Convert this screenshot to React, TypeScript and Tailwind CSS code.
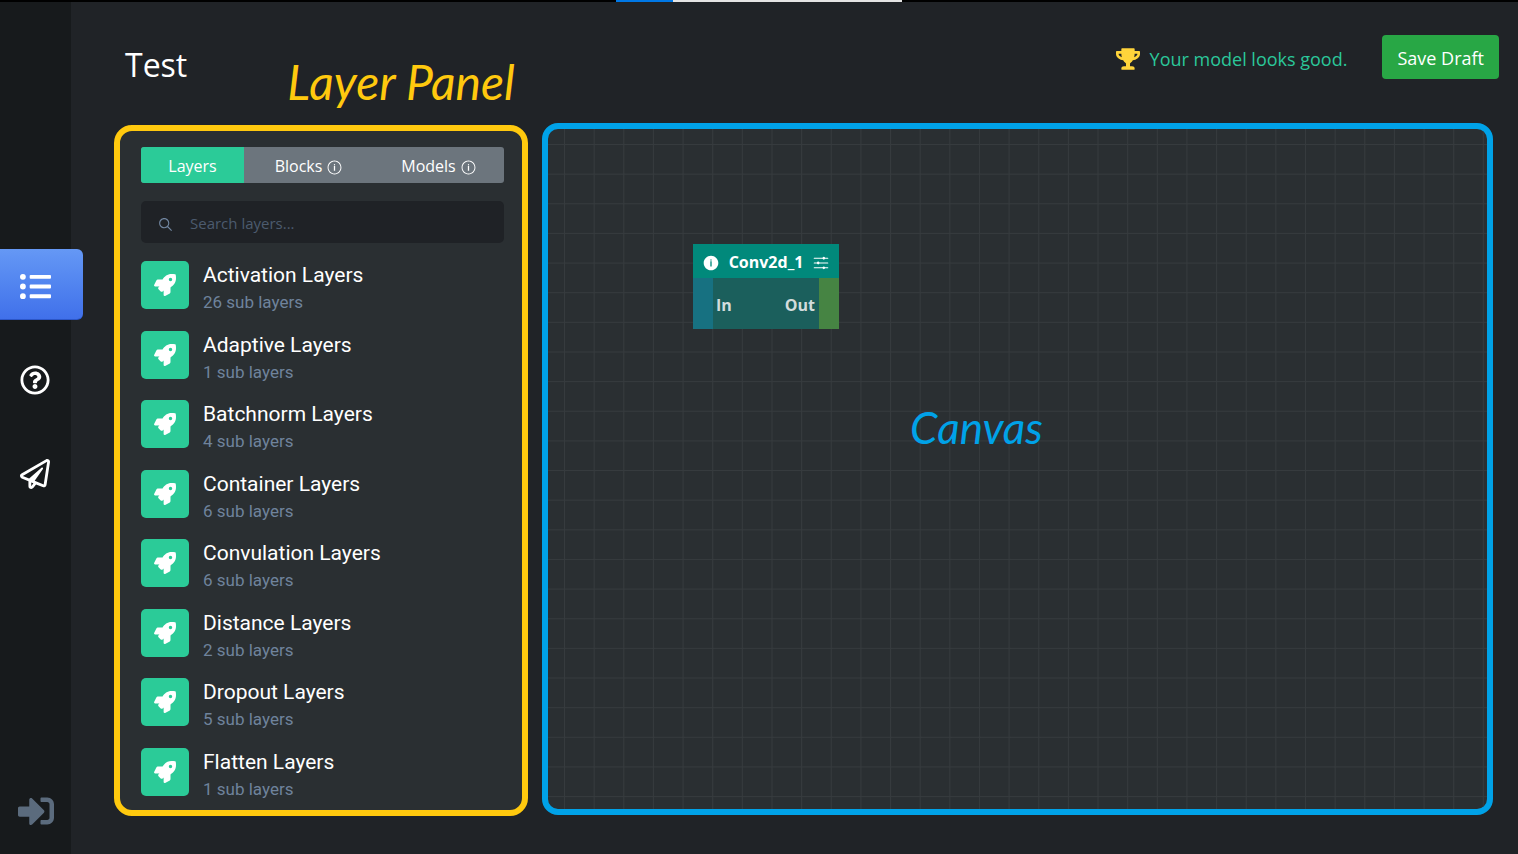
import React from "react";
import { FaListUl, FaRegQuestionCircle, FaRegPaperPlane, FaSignInAlt, FaTrophy, FaRocket } from "react-icons/fa";
import { IoIosInformationCircle, IoIosInformationCircleOutline, IoIosOptions, IoIosSearch } from "react-icons/io";

const layers = [
  { name: "Activation Layers", count: 26 },
  { name: "Adaptive Layers", count: 1 },
  { name: "Batchnorm Layers", count: 4 },
  { name: "Container Layers", count: 6 },
  { name: "Convulation Layers", count: 6 },
  { name: "Distance Layers", count: 2 },
  { name: "Dropout Layers", count: 5 },
  { name: "Flatten Layers", count: 1 },
];

function Sidebar() {
  return (
    <nav aria-label="Main" className="flex w-[71px] shrink-0 flex-col bg-[#171a1c] text-white">
      <div className="mt-[247px] flex flex-col items-start">
        <a href="#layers" aria-label="Layers" className="z-10 flex h-[71px] w-[83px] items-center rounded-r-md border-b border-[#2c56c8] bg-linear-to-b from-[#6598f5] to-[#4070ea] pt-1 pl-5">
          <FaListUl size={31} />
        </a>
        <a href="#help" aria-label="Help" className="mt-[45px] pl-5">
          <FaRegQuestionCircle size={30} />
        </a>
        <a href="#send" aria-label="Send" className="mt-16 pl-5">
          <FaRegPaperPlane size={30} />
        </a>
      </div>
      <a href="#exit" aria-label="Sign out" className="mt-auto mb-[25px] pl-[18px] text-[#5b6b7d]">
        <FaSignInAlt size={36} />
      </a>
    </nav>
  );
}

function LayerPanel() {
  return (
    <section aria-label="Layer panel" className="mt-0.5 flex w-[414px] shrink-0 flex-col overflow-hidden rounded-[18px] border-6 border-[#ffc90e] bg-[#2a2f32] pt-4 pr-[18px] pb-[14px] pl-[21px]">
      <div className="flex h-9 shrink-0 overflow-hidden rounded-[3px] bg-[#6c757d] text-base text-white">
        <button type="button" className="w-[103px] bg-[#2bcb98] pt-0.5">Layers</button>
        <button type="button" className="flex flex-1 items-center justify-center gap-1 pt-0.5">
          Blocks <IoIosInformationCircleOutline size={17} className="mt-0.5" />
        </button>
        <button type="button" className="flex flex-1 items-center justify-center gap-1 pt-0.5">
          Models <IoIosInformationCircleOutline size={17} className="mt-0.5" />
        </button>
      </div>
      <label className="mt-[18px] flex h-[42px] shrink-0 items-center gap-4 rounded-[5px] bg-[#1f2226] pt-0.5 pl-4 text-[#7186a0]">
        <IoIosSearch size={17} className="mt-0.5" />
        <input type="text" aria-label="Search layers" placeholder="Search layers..." className="min-w-0 flex-1 bg-transparent text-[15px] outline-none placeholder:text-[#4c5b6e]" />
      </label>
      <ul className="mt-[18px] flex flex-1 flex-col justify-between font-[Roboto,sans-serif]">
        {layers.map(({ name, count }) => (
          <li key={name} className="flex h-12 gap-[14px]">
            <span className="flex size-12 items-center justify-center rounded-[5px] bg-[#2bcb98] text-white">
              <FaRocket size={22} />
            </span>
            <div>
              <h2 className="text-[21px] leading-7 text-white">{name}</h2>
              <p className="text-[17px] leading-[26px] text-[#6f839c]">{count} sub layers</p>
            </div>
          </li>
        ))}
      </ul>
    </section>
  );
}

function Grid() {
  return (
    <svg className="absolute inset-0 size-full" aria-hidden="true">
      <defs>
        <pattern id="grid" width="29.64" height="29.64" patternUnits="userSpaceOnUse" x="16" y="15">
          <path d="M0.5 0V29.64M0 0.5H29.64" stroke="#363b3e" strokeWidth="1" fill="none" />
        </pattern>
      </defs>
      <rect width="100%" height="100%" fill="url(#grid)" />
    </svg>
  );
}

function Canvas() {
  return (
    <section aria-label="Canvas" className="relative mb-px min-w-0 flex-1 overflow-hidden rounded-[16px] border-6 border-[#00a2e8] bg-[#2a2f32]">
      <Grid />
      <article className="absolute top-[115px] left-[145px] w-[146px] text-base font-bold">
        <header className="flex h-[34px] items-center justify-between bg-[#01897b] px-[9px] pt-0.5 text-white">
          <IoIosInformationCircle size={18} className="mt-0.5" />
          <h2>Conv2d_1</h2>
          <IoIosOptions size={18} className="mt-0.5" />
        </header>
        <div className="flex h-[51px] bg-[#1b5f5c] text-[#d3dcdc]">
          <span className="w-5 bg-[#177181]" />
          <span className="flex flex-1 items-center justify-between pt-0.5 pr-1 pl-[3px]">
            <span>In</span>
            <span>Out</span>
          </span>
          <span className="w-5 bg-[#468443]" />
        </div>
      </article>
      <p className="absolute top-[268px] left-[362px] font-[Lato,sans-serif] text-[44px] leading-[60px] text-[#00a2e8] italic">Canvas</p>
    </section>
  );
}

export default function App() {
  return (
    <div className="flex min-h-screen flex-col bg-[#202327] font-['Open_Sans',sans-serif]">
      <div className="flex h-0.5 justify-center bg-black">
        <div className="w-[57px] bg-[#0078e6]" />
        <div className="w-[229px] bg-[#e4e4e4]" />
      </div>
      <div className="flex flex-1">
        <Sidebar />
        <div className="flex min-w-0 flex-1 flex-col pl-[43px]">
          <header className="flex h-[121px] items-start pr-[19px]">
            <h1 className="mt-[38px] ml-[11px] text-[32px] leading-[50px] text-white">Test</h1>
            <p className="mt-[50px] ml-[100px] font-[Lato,sans-serif] text-[48px] leading-[60px] text-[#ffc90e] italic">Layer Panel</p>
            <p className="mt-[43px] ml-auto flex items-center gap-[10px] text-lg leading-7 text-[#2bc79a]">
              <FaTrophy size={24} className="text-[#ffd43b]" />
              Your model looks good.
            </p>
            <button type="button" className="mt-[33px] ml-[35px] h-11 rounded-[4px] bg-[#28a745] px-[15px] pt-0.5 text-lg text-white">Save Draft</button>
          </header>
          <main className="mr-[25px] mb-[38px] flex flex-1 gap-[14px]">
            <LayerPanel />
            <Canvas />
          </main>
        </div>
      </div>
    </div>
  );
}
